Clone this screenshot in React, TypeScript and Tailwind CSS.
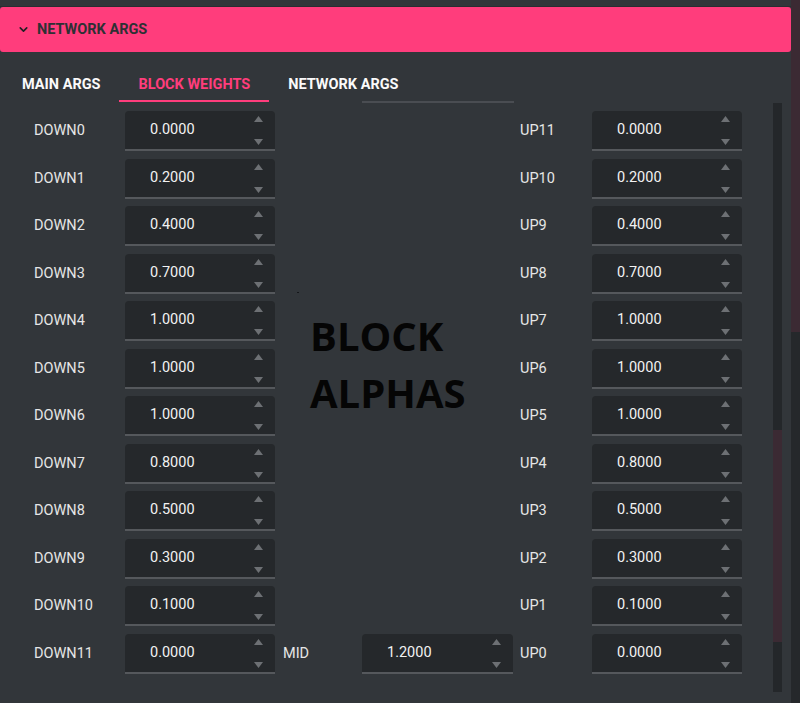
import React from 'react';
import { ChevronDown } from 'lucide-react';

const weights = ['0.0000', '0.2000', '0.4000', '0.7000', '1.0000', '1.0000', '1.0000', '0.8000', '0.5000', '0.3000', '0.1000', '0.0000'];

function SpinInput({ value, width = 'w-[150px]' }: { value: string; width?: string }) {
  return (
    <div className={`${width} h-[40px] flex items-center bg-[#25282b] rounded-t-[4px] border-b-2 border-[#55585c]`}>
      <span className="flex-1 pl-[25px] text-[14.5px] text-[#f2f2f2]">{value}</span>
      <div className="h-full flex flex-col justify-between pt-[5px] pb-[4px] pr-[12px]">
        <svg width="9" height="6" viewBox="0 0 9 6">
          <polygon points="4.5,0 9,6 0,6" fill="#6d7074" />
        </svg>
        <svg width="9" height="6" viewBox="0 0 9 6">
          <polygon points="0,0 9,0 4.5,6" fill="#6d7074" />
        </svg>
      </div>
    </div>
  );
}

function WeightRow({ label, value, labelWidth }: { label: string; value: string; labelWidth: string }) {
  return (
    <div className="h-[40px] flex items-center">
      <span className={`${labelWidth} text-[14.5px] text-[#e6e6e6]`}>{label}</span>
      <SpinInput value={value} />
    </div>
  );
}

export default function App() {
  const tabs = ['MAIN ARGS', 'BLOCK WEIGHTS', 'NETWORK ARGS'];

  return (
    <div className="w-[800px] h-[703px] flex bg-[#32363a] overflow-hidden" style={{ fontFamily: 'Roboto, "Liberation Sans", sans-serif' }}>
      <div className="w-[791px] flex flex-col">
        <div className="h-[7px] border-b border-[#2a2d31]" />
        <div className="h-[45px] flex items-center gap-[7px] pl-[17px] bg-[#ff3d7c] rounded-[3px]">
          <ChevronDown size={13} strokeWidth={3} color="#1f2124" />
          <span className="text-[14.5px] font-bold text-[#2e3034]">NETWORK ARGS</span>
        </div>

        <div className="relative flex pl-[3px] mt-[12px]">
          {tabs.map((t) => (
            <div
              key={t}
              className={`h-[38px] flex items-center px-[19px] pt-[5px] border-b-2 text-[14.5px] font-bold ${
                t === 'BLOCK WEIGHTS' ? 'border-[#ff3d7c] text-[#ff3d7c]' : 'border-transparent text-[#fafafa]'
              }`}
            >
              {t}
            </div>
          ))}
          <div className="absolute left-[362px] bottom-[-1px] w-[152px] h-[2px] bg-[#4a4d52]" />
        </div>

        <div className="h-[589px] flex mt-[1px]">
          <div className="w-[773px] pt-[8px] pl-[34px]">
            <div className="flex">
              <div className="flex flex-col gap-[7.5px]">
                {weights.map((v, i) => (
                  <WeightRow key={i} label={`DOWN${i}`} value={v} labelWidth="w-[91px]" />
                ))}
              </div>

              <div className="w-[230px] ml-[8px] flex flex-col">
                <div className="ml-[14px] mt-[181px] w-[2px] h-[1px] bg-[#15171a]" />
                <div
                  className="pl-[27px] mt-[14px] text-[40px] leading-[57px] font-bold text-[#050505]"
                  style={{ fontFamily: '"Open Sans", "Liberation Sans", sans-serif' }}
                >
                  BLOCK
                  <br />
                  ALPHAS
                </div>
                <div className="mt-auto h-[40px] flex items-center">
                  <span className="w-[79px] text-[14.5px] text-[#e6e6e6]">MID</span>
                  <SpinInput value="1.2000" width="w-[151px]" />
                </div>
              </div>

              <div className="ml-[7px] flex flex-col gap-[7.5px]">
                {weights.map((v, i) => (
                  <WeightRow key={i} label={`UP${11 - i}`} value={v} labelWidth="w-[72px]" />
                ))}
              </div>
            </div>
          </div>

          <div className="w-[9px] h-full flex flex-col bg-[#24272a]">
            <div className="h-[327px]" />
            <div className="h-[212px] bg-[#3b2a33]" />
          </div>
        </div>
      </div>

      <div className="w-[9px] h-full flex flex-col bg-[#25282b]">
        <div className="h-[332px] bg-[#3b2a33]" />
      </div>
    </div>
  );
}
